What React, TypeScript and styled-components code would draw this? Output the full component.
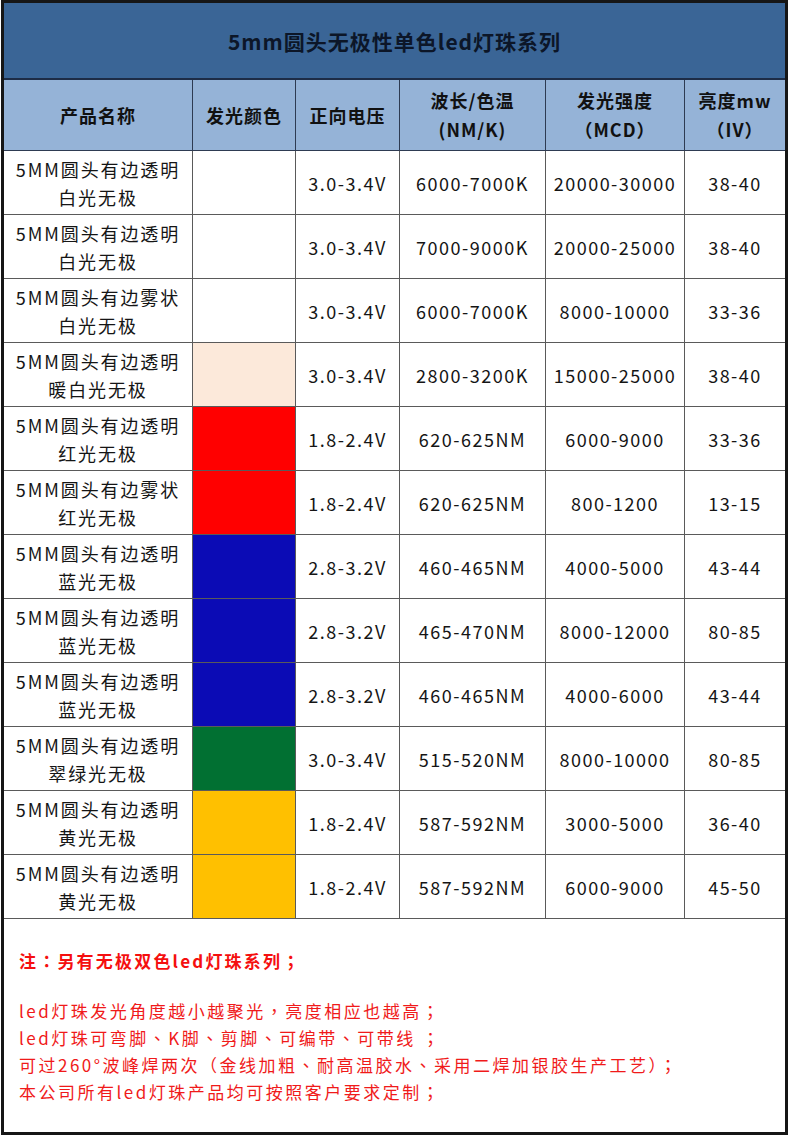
import React from "react";
import styled, { createGlobalStyle } from "styled-components";

const Global = createGlobalStyle`
  html, body { margin: 0; padding: 0; background: #ffffff; }
  body {
    font-family: "Noto Sans CJK SC", "Noto Sans", sans-serif;
  }
`;

const Frame = styled.div`
  box-sizing: border-box;
  width: 787px;
  margin: 0 0 0 1px;
  border: 3px solid #161616;
  background: #fff;
  display: flex;
  flex-direction: column;
`;

const Title = styled.div`
  height: 75px;
  background: #3a6596;
  border-bottom: 2px solid #1d2c46;
  display: flex;
  align-items: center;
  justify-content: center;
  font-size: 21px;
  font-weight: 700;
  color: #0c1628;
  letter-spacing: 1px;
`;

const Grid = styled.div`
  display: grid;
  grid-template-columns: 189px 103px 104px 146px 139px 100px;
`;

const HeadCell = styled.div<{ $last?: boolean }>`
  box-sizing: border-box;
  height: 71px;
  background: #95b3d7;
  border-right: ${(p) => (p.$last ? "none" : "1px solid #2e3b52")};
  border-bottom: 1px solid #2e3b52;
  display: flex;
  flex-direction: column;
  align-items: center;
  justify-content: center;
  font-size: 18px;
  font-weight: 700;
  color: #111;
  line-height: 29px;
  letter-spacing: 1px;
  text-align: center;
`;

const Cell = styled.div<{ $last?: boolean; $bg?: string; $name?: boolean }>`
  box-sizing: border-box;
  height: 64px;
  background: ${(p) => p.$bg || "#fff"};
  border-right: ${(p) => (p.$last ? "none" : "1px solid #5a5a5a")};
  border-bottom: 1px solid #5a5a5a;
  display: flex;
  flex-direction: column;
  align-items: center;
  justify-content: center;
  font-size: 18px;
  color: #151515;
  line-height: 28px;
  letter-spacing: ${(p) => (p.$name ? "1.9px" : "1.5px")};
  text-align: center;
`;

const Notes = styled.div`
  height: 213px;
  box-sizing: border-box;
  padding: 28px 0 0 15px;
  color: #f01a1a;
  font-size: 17px;
  line-height: 27px;
  letter-spacing: 2.5px;
`;

const NoteHead = styled.div`
  font-weight: 700;
  color: #f50f0f;
  letter-spacing: 2.2px;
  margin-bottom: 23px;
`;

const P = styled.span`
  font-family: "Noto Sans CJK TC", "Noto Sans CJK SC", sans-serif;
`;

type Row = {
  name: [string, string];
  color?: string;
  v: string;
  wl: string;
  mcd: string;
  iv: string;
};

const rows: Row[] = [
  { name: ["5MM圆头有边透明", "白光无极"], v: "3.0-3.4V", wl: "6000-7000K", mcd: "20000-30000", iv: "38-40" },
  { name: ["5MM圆头有边透明", "白光无极"], v: "3.0-3.4V", wl: "7000-9000K", mcd: "20000-25000", iv: "38-40" },
  { name: ["5MM圆头有边雾状", "白光无极"], v: "3.0-3.4V", wl: "6000-7000K", mcd: "8000-10000", iv: "33-36" },
  { name: ["5MM圆头有边透明", "暖白光无极"], color: "#fce9da", v: "3.0-3.4V", wl: "2800-3200K", mcd: "15000-25000", iv: "38-40" },
  { name: ["5MM圆头有边透明", "红光无极"], color: "#ff0000", v: "1.8-2.4V", wl: "620-625NM", mcd: "6000-9000", iv: "33-36" },
  { name: ["5MM圆头有边雾状", "红光无极"], color: "#ff0000", v: "1.8-2.4V", wl: "620-625NM", mcd: "800-1200", iv: "13-15" },
  { name: ["5MM圆头有边透明", "蓝光无极"], color: "#0b0bb5", v: "2.8-3.2V", wl: "460-465NM", mcd: "4000-5000", iv: "43-44" },
  { name: ["5MM圆头有边透明", "蓝光无极"], color: "#0b0bb5", v: "2.8-3.2V", wl: "465-470NM", mcd: "8000-12000", iv: "80-85" },
  { name: ["5MM圆头有边透明", "蓝光无极"], color: "#0b0bb5", v: "2.8-3.2V", wl: "460-465NM", mcd: "4000-6000", iv: "43-44" },
  { name: ["5MM圆头有边透明", "翠绿光无极"], color: "#017032", v: "3.0-3.4V", wl: "515-520NM", mcd: "8000-10000", iv: "80-85" },
  { name: ["5MM圆头有边透明", "黄光无极"], color: "#ffc000", v: "1.8-2.4V", wl: "587-592NM", mcd: "3000-5000", iv: "36-40" },
  { name: ["5MM圆头有边透明", "黄光无极"], color: "#ffc000", v: "1.8-2.4V", wl: "587-592NM", mcd: "6000-9000", iv: "45-50" },
];

const PUNCT = /([：；，、（）])/;

function Text({ children }: { children: string }) {
  return (
    <>
      {children.split(PUNCT).map((part, i) =>
        PUNCT.test(part) ? <P key={i}>{part}</P> : <React.Fragment key={i}>{part}</React.Fragment>
      )}
    </>
  );
}

const notes = [
  "led灯珠发光角度越小越聚光，亮度相应也越高；",
  "led灯珠可弯脚、K脚、剪脚、可编带、可带线 ；",
  "可过260°波峰焊两次（金线加粗、耐高温胶水、采用二焊加银胶生产工艺）；",
  "本公司所有led灯珠产品均可按照客户要求定制；",
];

export default function App() {
  return (
    <>
      <Global />
      <Frame>
        <Title>5mm圆头无极性单色led灯珠系列</Title>
        <Grid>
          <HeadCell>产品名称</HeadCell>
          <HeadCell>发光颜色</HeadCell>
          <HeadCell>正向电压</HeadCell>
          <HeadCell>
            <span>波长/色温</span>
            <span>(NM/K)</span>
          </HeadCell>
          <HeadCell>
            <span>发光强度</span>
            <span>
              <Text>（MCD）</Text>
            </span>
          </HeadCell>
          <HeadCell $last>
            <span>亮度mw</span>
            <span>
              <Text>（IV）</Text>
            </span>
          </HeadCell>
          {rows.map((r, i) => (
            <React.Fragment key={i}>
              <Cell $name>
                <span>{r.name[0]}</span>
                <span>{r.name[1]}</span>
              </Cell>
              <Cell $bg={r.color} />
              <Cell>{r.v}</Cell>
              <Cell>{r.wl}</Cell>
              <Cell>{r.mcd}</Cell>
              <Cell $last>{r.iv}</Cell>
            </React.Fragment>
          ))}
        </Grid>
        <Notes>
          <NoteHead>
            <Text>注：另有无极双色led灯珠系列；</Text>
          </NoteHead>
          {notes.map((n, i) => (
            <div key={i}>
              <Text>{n}</Text>
            </div>
          ))}
        </Notes>
      </Frame>
    </>
  );
}
